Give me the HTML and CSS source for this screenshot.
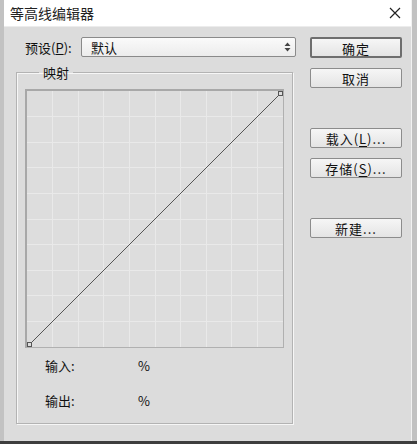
FILE: index.html
```html
<!DOCTYPE html>
<html lang="zh-CN">
<head>
  <meta charset="UTF-8">
  <title>等高线编辑器</title>
  <link rel="stylesheet" href="styles.css">
</head>
<body>
  <div class="dialog">
    <!-- 标题栏 -->
    <div class="titlebar">
      <span class="title">等高线编辑器</span>
      <svg class="close" width="12" height="12" viewBox="0 0 12 12">
        <path d="M1 1 L11 11 M11 1 L1 11" stroke="#222" stroke-width="1.2" fill="none"/>
      </svg>
    </div>

    <div class="content">
      <div class="main">
        <!-- 预设 -->
        <div class="preset">
          <span class="label">预设(<u>P</u>):</span>
          <div class="select">
            <span>默认</span>
            <svg width="7" height="10" viewBox="0 0 7 10">
              <path d="M0.5 4 L3.5 0.5 L6.5 4 Z M0.5 6 L3.5 9.5 L6.5 6 Z" fill="#444"/>
            </svg>
          </div>
        </div>

        <!-- 映射 -->
        <fieldset class="group">
          <legend>映射</legend>
          <div class="graph">
            <svg width="256" height="256" viewBox="0 0 256 256">
              <g stroke="#e9e9e9" stroke-width="1">
                <path d="M25.5 0 V256 M51.5 0 V256 M76.5 0 V256 M102.5 0 V256 M128.5 0 V256 M153.5 0 V256 M179.5 0 V256 M204.5 0 V256 M230.5 0 V256"/>
                <path d="M0 25.5 H256 M0 51.5 H256 M0 76.5 H256 M0 102.5 H256 M0 128.5 H256 M0 153.5 H256 M0 179.5 H256 M0 204.5 H256 M0 230.5 H256"/>
              </g>
              <line x1="3" y1="253" x2="253" y2="3" stroke="#555" stroke-width="1"/>
              <rect x="0.5" y="251.5" width="4" height="4" fill="#ddd" stroke="#555"/>
              <rect x="251.5" y="0.5" width="4" height="4" fill="#ddd" stroke="#555"/>
            </svg>
          </div>
          <div class="readout">
            <span class="name">输入:</span>
            <span class="unit">%</span>
          </div>
          <div class="readout">
            <span class="name">输出:</span>
            <span class="unit">%</span>
          </div>
        </fieldset>
      </div>

      <!-- 按钮 -->
      <div class="buttons">
        <button class="btn default">确定</button>
        <button class="btn">取消</button>
        <button class="btn gap-big">载入(<u>L</u>)...</button>
        <button class="btn">存储(<u>S</u>)...</button>
        <button class="btn gap-mid">新建...</button>
      </div>
    </div>
  </div>
</body>
</html>
```

FILE: styles.css
```css
body {
  margin: 0;
  padding: 0;
  height: 444px;
  overflow: hidden;
  background: linear-gradient(to bottom, #c2c2c2 0, #c2c2c2 441px, #3e3e3e 441px);
  font-family: "Noto Sans CJK SC", "Liberation Sans", sans-serif;
  font-size: 13px;
  color: #111;
}

.dialog {
  margin-left: 4px;
  width: 408px;
  height: 441px;
  background: #dcdcdc;
  border-right: 1px solid #f2f2f2;
  box-sizing: border-box;
}

.titlebar {
  height: 27px;
  background: #fff;
  display: flex;
  align-items: center;
  justify-content: space-between;
  padding: 0 10px 0 6px;
  border-bottom: 1px solid #ececec;
  box-sizing: border-box;
}

.title {
  font-size: 14px;
  color: #222;
}

.content {
  display: flex;
  padding-left: 12px;
}

.main {
  width: 280px;
}

.preset {
  display: flex;
  align-items: center;
  margin-top: 10px;
  padding-left: 9px;
}

.label {
  width: 56px;
}

.select {
  flex: 1;
  height: 20px;
  display: flex;
  align-items: center;
  justify-content: space-between;
  padding: 0 4px 0 9px;
  border: 1px solid #8a8a8a;
  border-radius: 2px;
  background: linear-gradient(#fafafa, #ececec);
  box-sizing: border-box;
}

.group {
  margin: 0;
  margin-top: 6px;
  width: 277px;
  height: 361px;
  padding: 7px 0 0 8px;
  border: 1px solid #b3b3b3;
  box-shadow: 1px 1px 0 #f6f6f6, inset 1px 1px 0 #f6f6f6;
  box-sizing: border-box;
}

.group legend {
  margin-left: 14px;
  padding: 0 4px;
}

.graph {
  width: 256px;
  height: 256px;
  border: 1px solid #b0b0b0;
  border-top: 2px solid #a8a8a8;
  border-left: 2px solid #a8a8a8;
  background: #dddddd;
}

.graph svg {
  display: block;
}

.readout {
  display: flex;
  height: 35px;
  align-items: center;
  padding-left: 20px;
}

.readout:first-of-type {
  margin-top: 6px;
}

.readout .name {
  width: 93px;
}

.buttons {
  display: flex;
  flex-direction: column;
  margin-left: 14px;
  padding-top: 10px;
}

.btn {
  width: 92px;
  height: 20px;
  margin-bottom: 10px;
  padding: 0;
  font-family: inherit;
  font-size: 13px;
  letter-spacing: 1px;
  color: #111;
  border: 1px solid #8c8c8c;
  border-radius: 2px;
  background: linear-gradient(#f6f6f6, #e4e4e4);
  box-sizing: border-box;
}

.btn.default {
  height: 21px;
  border: 2px solid #6e6e6e;
}

.btn u {
  text-underline-offset: 2px;
}

.gap-big {
  margin-top: 30px;
}

.gap-mid {
  margin-top: 30px;
}
```
